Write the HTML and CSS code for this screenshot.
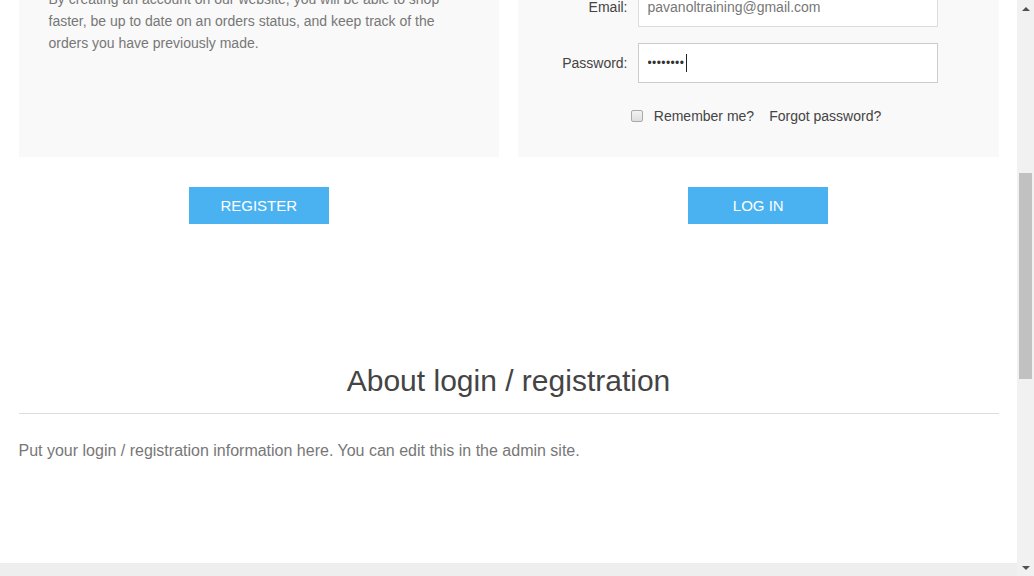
FILE: index.html
```html
<!DOCTYPE html>
<html lang="en">
<head>
<meta charset="utf-8">
<title>Login</title>
<link rel="stylesheet" href="styles.css">
</head>
<body>
<div class="window">
  <div class="page">
    <div class="master">
      <div class="customer-blocks">
        <div class="block new-customer">
          <p class="info">By creating an account on our website, you will be able to shop faster, be up to date on an orders status, and keep track of the orders you have previously made.</p>
        </div>
        <div class="block returning">
          <div class="inputs">
            <label class="lbl" for="email">Email:</label>
            <input id="email" class="field" type="text" value="pavanoltraining@gmail.com">
          </div>
          <div class="inputs">
            <label class="lbl" for="pwd">Password:</label>
            <div class="field-wrap">
              <input id="pwd" class="field" type="password" value="12345678">
              <span class="caret"></span>
            </div>
          </div>
          <div class="remember">
            <span class="check"></span>
            <span class="remember-text">Remember me?</span>
            <a class="forgot" href="#">Forgot password?</a>
          </div>
        </div>
      </div>
      <div class="buttons-row">
        <div class="btn-cell"><button class="btn">REGISTER</button></div>
        <div class="btn-cell"><button class="btn">LOG IN</button></div>
      </div>
      <div class="topic">
        <h2 class="topic-title">About login / registration</h2>
        <p class="topic-body">Put your login / registration information here. You can edit this in the admin site.</p>
      </div>
    </div>
    <div class="footer-strip"></div>
  </div>
  <div class="scrollbar">
    <div class="arrow up"></div>
    <div class="track"><div class="thumb"></div></div>
    <div class="arrow down"></div>
  </div>
</div>
</body>
</html>
```

FILE: styles.css
```css
* { box-sizing: border-box; }
html, body { margin: 0; padding: 0; }
body {
  font-family: "Liberation Sans", Arial, sans-serif;
  font-size: 14px;
  color: #777;
  background: #fff;
  overflow: hidden;
}
.window {
  display: flex;
  width: 1034px;
  height: 576px;
  overflow: hidden;
}
.page {
  flex: 1;
  display: flex;
  flex-direction: column;
  overflow: hidden;
}
.master {
  flex: 1;
  width: 980px;
  margin: -13px auto 0;
}
.customer-blocks {
  display: flex;
  gap: 19px;
}
.block {
  background: #f9f9f9;
}
.new-customer {
  width: 480px;
  padding: 1px 30px 0;
}
.info {
  margin: 0;
  line-height: 22px;
  font-size: 14px;
  color: #777;
}
.returning {
  width: 481px;
  padding: 0 0 31px;
}
.inputs {
  display: flex;
  align-items: center;
  margin-bottom: 16px;
}
.inputs:nth-child(2) { margin-bottom: 0; }
.lbl {
  width: 110px;
  text-align: right;
  margin-right: 10px;
  color: #444;
  font-size: 14px;
}
.field-wrap { position: relative; }
.field {
  width: 300px;
  height: 40px;
  border: 1px solid #ddd;
  padding: 0 9px;
  font-family: "Liberation Sans", Arial, sans-serif;
  font-size: 14px;
  color: #777;
  background: #fff;
  outline: none;
}
.field-wrap .field {
  border-color: #ccc;
  font-size: 12px;
  letter-spacing: 0.4px;
  color: #333;
}
.caret {
  position: absolute;
  left: 48px;
  top: 11px;
  width: 1px;
  height: 18px;
  background: #222;
}
.remember {
  display: flex;
  align-items: center;
  justify-content: center;
  margin-top: 23px;
  height: 20px;
  padding-right: 4px;
  color: #444;
}
.check {
  width: 12px;
  height: 12px;
  border: 1px solid #a9a9a9;
  border-radius: 2px;
  background: linear-gradient(#f2f2f2, #dedede);
  margin-right: 11px;
}
.remember-text { margin-right: 15px; }
.forgot { color: #444; text-decoration: none; }
.buttons-row {
  display: flex;
  gap: 19px;
  margin-top: 30px;
}
.btn-cell {
  flex: 1;
  display: flex;
  justify-content: center;
}
.btn {
  width: 140px;
  height: 37px;
  border: none;
  background: #4ab2f1;
  color: #fff;
  font-family: "Liberation Sans", Arial, sans-serif;
  font-size: 15px;
  padding: 0;
  cursor: pointer;
}
.topic {
  margin-top: 140px;
}
.topic-title {
  margin: 0;
  font-weight: normal;
  font-size: 30px;
  line-height: 34px;
  color: #444;
  text-align: center;
  padding-bottom: 15px;
  border-bottom: 1px solid #ddd;
}
.topic-body {
  margin: 26px 0 0;
  font-size: 16px;
  line-height: 22px;
  color: #777;
}
.footer-strip {
  height: 13px;
  background: #eee;
}
.scrollbar {
  width: 17px;
  background: #f1f1f1;
  display: flex;
  flex-direction: column;
}
.arrow {
  height: 17px;
  display: flex;
  align-items: center;
  justify-content: center;
}
.arrow.up::before {
  content: "";
  border-left: 4px solid transparent;
  border-right: 4px solid transparent;
  border-bottom: 4px solid #505050;
}
.arrow.down::before {
  content: "";
  border-left: 4px solid transparent;
  border-right: 4px solid transparent;
  border-top: 4px solid #505050;
}
.track {
  flex: 1;
  padding: 156px 2px 0;
}
.thumb {
  height: 206px;
  background: #c1c1c1;
}
```
